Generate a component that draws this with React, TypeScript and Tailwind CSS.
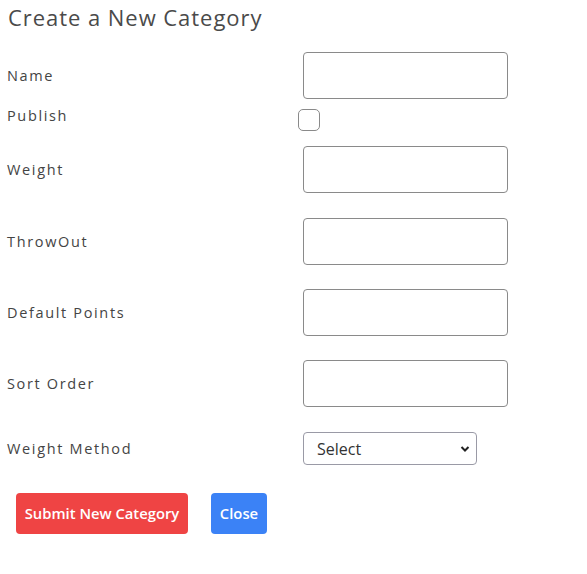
import React from "react";

const labelCls =
  "text-[14.5px] tracking-[1.65px] text-[#444] leading-none pt-[2px]";

function InputRow({ label, mt }: { label: string; mt: string }) {
  return (
    <div className={`flex items-center ${mt}`}>
      <div className={`w-[296px] ${labelCls}`}>{label}</div>
      <input
        type="text"
        className="w-[205px] h-[47px] border border-[#8a8a8a] rounded-[4px] bg-white outline-none"
      />
    </div>
  );
}

export default function App() {
  return (
    <div
      className="w-[587px] h-[574px] bg-white text-[#444]"
      style={{ fontFamily: '"Open Sans", "Liberation Sans", sans-serif' }}
    >
      <div className="pl-[7px]">
        <h1 className="pt-[3px] pl-[1px] text-[22px] leading-[28px] tracking-[0.95px] text-[#4a4a4a] font-normal">
          Create a New Category
        </h1>
        <InputRow label="Name" mt="mt-[21px]" />
        <div className="flex items-start mt-[10px] h-[22px]">
          <div className="w-[291px] text-[14.5px] tracking-[1.65px] text-[#444] leading-none">
            Publish
          </div>
          <div className="w-[22px] h-[22px] border border-[#8a8a8a] rounded-[5px] bg-white" />
        </div>
        <InputRow label="Weight" mt="mt-[15px]" />
        <InputRow label="ThrowOut" mt="mt-[25px]" />
        <InputRow label="Default Points" mt="mt-[24px]" />
        <InputRow label="Sort Order" mt="mt-[24px]" />
        <div className="flex items-center mt-[25px]">
          <div className={`w-[296px] ${labelCls}`}>Weight Method</div>
          <div className="relative w-[174px] h-[33px] border border-[#9a9aa6] rounded-[4px] bg-white flex items-center pl-[13px]">
            <span className="text-[16px] text-[#333]">Select</span>
            <svg
              className="absolute right-[6px] top-[12px]"
              width="10"
              height="8"
              viewBox="0 0 10 8"
            >
              <path d="M1.5 2 L5 5.5 L8.5 2" fill="none" stroke="#222" strokeWidth="2" />
            </svg>
          </div>
        </div>
        <div className="flex mt-[28px] pl-[9px] gap-[23px]">
          <button className="h-[41px] w-[172px] bg-[#ef4444] text-white rounded-[4px] text-[14.8px] font-semibold">
            Submit New Category
          </button>
          <button className="h-[41px] w-[56px] bg-[#3b82f6] text-white rounded-[4px] text-[14.8px] font-semibold">
            Close
          </button>
        </div>
      </div>
    </div>
  );
}
